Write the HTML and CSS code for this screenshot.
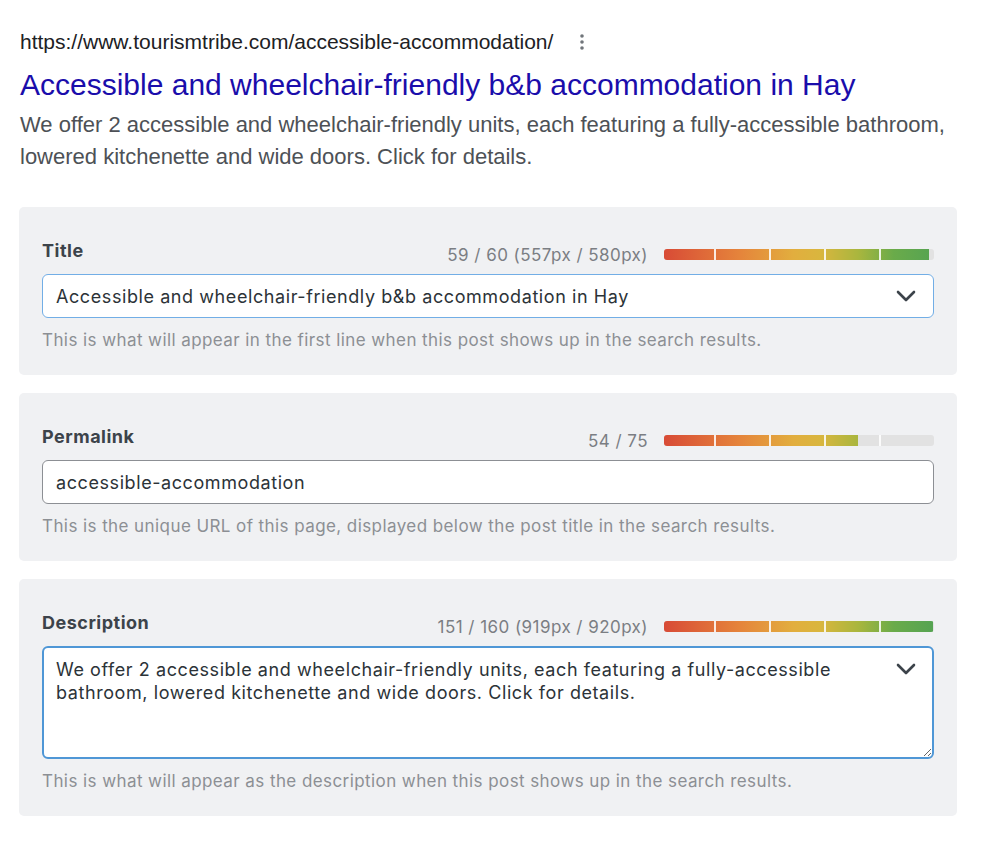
FILE: index.html
```html
<!DOCTYPE html>
<html lang="en">
<head>
<meta charset="utf-8">
<title>SEO preview</title>
<link rel="stylesheet" href="styles.css">
</head>
<body>
<div class="page">
  <div class="serp">
    <div class="serp-url-row">
      <span class="serp-url">https://www.tourismtribe.com/accessible-accommodation/</span>
      <svg class="kebab" width="6" height="18" viewBox="0 0 6 18" aria-hidden="true">
        <circle cx="3" cy="3" r="1.8"/>
        <circle cx="3" cy="9" r="1.8"/>
        <circle cx="3" cy="15" r="1.8"/>
      </svg>
    </div>
    <div class="serp-title">Accessible and wheelchair-friendly b&amp;b accommodation in Hay</div>
    <div class="serp-desc">We offer 2 accessible and wheelchair-friendly units, each featuring a fully-accessible bathroom, lowered kitchenette and wide doors. Click for details.</div>
  </div>

  <div class="cards">
    <section class="card">
      <div class="card-head">
        <label class="card-label">Title</label>
        <div class="meter">
          <span class="meter-count">59 / 60 (557px / 580px)</span>
          <div class="bar"><div class="bar-fill" style="width:98.2%"></div><div class="bar-ticks"><i></i><i></i><i></i><i></i><i></i></div></div>
        </div>
      </div>
      <div class="field field-select">
        <input class="input input-active" type="text" value="Accessible and wheelchair-friendly b&amp;b accommodation in Hay">
        <svg class="chevron" width="22" height="22" viewBox="0 0 22 22" aria-hidden="true"><polyline points="3,7 11,15 19,7"/></svg>
      </div>
      <p class="help">This is what will appear in the first line when this post shows up in the search results.</p>
    </section>

    <section class="card">
      <div class="card-head">
        <label class="card-label">Permalink</label>
        <div class="meter">
          <span class="meter-count">54 / 75</span>
          <div class="bar"><div class="bar-fill" style="width:72%"></div><div class="bar-ticks"><i></i><i></i><i></i><i></i><i></i></div></div>
        </div>
      </div>
      <div class="field">
        <input class="input" type="text" value="accessible-accommodation">
      </div>
      <p class="help">This is the unique URL of this page, displayed below the post title in the search results.</p>
    </section>

    <section class="card">
      <div class="card-head">
        <label class="card-label">Description</label>
        <div class="meter">
          <span class="meter-count">151 / 160 (919px / 920px)</span>
          <div class="bar"><div class="bar-fill" style="width:99.8%"></div><div class="bar-ticks"><i></i><i></i><i></i><i></i><i></i></div></div>
        </div>
      </div>
      <div class="field field-select">
        <textarea class="textarea">We offer 2 accessible and wheelchair-friendly units, each featuring a fully-accessible bathroom, lowered kitchenette and wide doors. Click for details.</textarea>
        <svg class="chevron chevron-top" width="22" height="22" viewBox="0 0 22 22" aria-hidden="true"><polyline points="3,7 11,15 19,7"/></svg>
      </div>
      <p class="help">This is what will appear as the description when this post shows up in the search results.</p>
    </section>
  </div>
</div>
</body>
</html>
```

FILE: styles.css
```css
* { box-sizing: border-box; }
html, body { margin: 0; padding: 0; background: #ffffff; }
body { font-family: "Liberation Sans", Arial, sans-serif; }

.page {
  padding: 31px 27px 0 19px;
}

.serp { padding-left: 1px; }

.serp-url-row {
  display: flex;
  align-items: center;
  gap: 26px;
  height: 22px;
}
.serp-url {
  font-size: 21px;
  line-height: 22px;
  color: #202124;
}
.kebab { fill: #70757a; }

.serp-title {
  margin-top: 14px;
  font-size: 30px;
  line-height: 36px;
  color: #1a0dab;
}
.serp-desc {
  margin-top: 6px;
  font-size: 22px;
  line-height: 32px;
  color: #4d5156;
}

.cards {
  margin-top: 34px;
  display: flex;
  flex-direction: column;
  gap: 18px;
}

.card {
  background: #f0f1f3;
  border-radius: 5px;
  padding: 32px 23px 24px;
  font-family: Inter, "Noto Sans", sans-serif;
}

.card-head {
  display: flex;
  justify-content: space-between;
  align-items: flex-end;
}
.card-label {
  font-size: 18px;
  font-weight: 700;
  letter-spacing: 0.5px;
  line-height: 24px;
  color: #3c434a;
  margin-bottom: 3px;
}
.meter {
  display: flex;
  align-items: flex-end;
  gap: 16px;
}
.meter-count {
  font-size: 17px;
  letter-spacing: 0.45px;
  line-height: 22px;
  color: #7b7e83;
}
.bar {
  position: relative;
  width: 270px;
  height: 11px;
  margin-bottom: 6px;
  border-radius: 3px;
  background: #e2e2e2;
  overflow: hidden;
}
.bar-fill {
  height: 100%;
  background: linear-gradient(90deg, #d84b36 0%, #e5843b 28%, #e2ae3e 48%, #d9b63e 58%, #a9b63e 72%, #6aab4a 85%, #55a352 100%);
  background-size: 270px 100%;
}
.bar-ticks {
  position: absolute;
  inset: 0;
  display: flex;
}
.bar-ticks i {
  flex: 1;
  border-right: 2px solid rgba(255,255,255,0.85);
}
.bar-ticks i:first-child { flex: 0.95; }
.bar-ticks i:last-child { border-right: none; }

.field {
  position: relative;
  margin-top: 8px;
}
.input {
  display: block;
  width: 100%;
  height: 44px;
  padding: 0 60px 0 13px;
  border: 1px solid #8c8f94;
  border-radius: 6px;
  background: #ffffff;
  font-family: Inter, "Noto Sans", sans-serif;
  font-size: 18px;
  letter-spacing: 0.58px;
  color: #2c3338;
  outline: none;
}
.input-active { border-color: #72aee6; }

.textarea {
  display: block;
  width: 100%;
  height: 113px;
  padding: 10px 70px 10px 12px;
  border: 2px solid #4f97d6;
  border-radius: 6px;
  background: #ffffff;
  font-family: Inter, "Noto Sans", sans-serif;
  font-size: 18px;
  letter-spacing: 0.58px;
  line-height: 23px;
  color: #2c3338;
  resize: vertical;
  outline: none;
}

.chevron {
  position: absolute;
  right: 17px;
  top: 11px;
  fill: none;
  stroke: #3c434a;
  stroke-width: 2.6;
  stroke-linecap: round;
  stroke-linejoin: round;
}
.chevron-top { top: 12px; }

.help {
  margin: 11px 0 0;
  font-size: 17px;
  letter-spacing: 0.42px;
  line-height: 22px;
  color: #8c8f94;
}
```
